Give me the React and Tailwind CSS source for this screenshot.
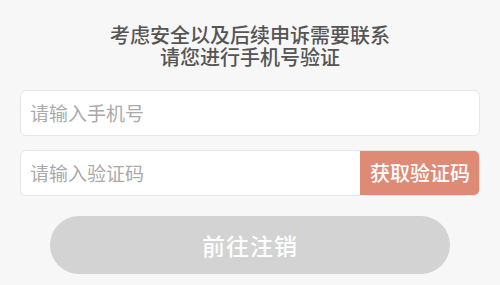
export default function App() {
  return (
    <div className="w-[500px] h-[285px] bg-[#f7f7f7] flex flex-col overflow-hidden font-['Noto_Sans_CJK_SC',sans-serif]">
      <div className="pt-[24px] text-center text-[20px] leading-[22px] font-medium text-[#555555]">
        <div>考虑安全以及后续申诉需要联系</div>
        <div>请您进行手机号验证</div>
      </div>
      <div className="mx-[20px] mt-[22px] h-[46px] bg-white border border-[#e6e6e6] rounded-[6px] flex items-center pl-[9px]">
        <span className="text-[19px] text-[#aaaaaa]">请输入手机号</span>
      </div>
      <div className="mx-[20px] mt-[14px] h-[46px] bg-white border border-[#e6e6e6] rounded-[6px] flex items-stretch overflow-hidden">
        <div className="flex-1 flex items-center pl-[9px]">
          <span className="text-[19px] text-[#aaaaaa]">请输入验证码</span>
        </div>
        <div className="w-[120px] -my-px -mr-px bg-[#de8a74] flex items-center justify-center">
          <span className="text-[20px] font-medium text-white">获取验证码</span>
        </div>
      </div>
      <div className="mx-[50px] mt-[20px] h-[58px] rounded-full bg-[#d3d3d3] flex items-center justify-center">
        <span className="text-[23px] font-medium text-white tracking-[1px]">前往注销</span>
      </div>
    </div>
  );
}
